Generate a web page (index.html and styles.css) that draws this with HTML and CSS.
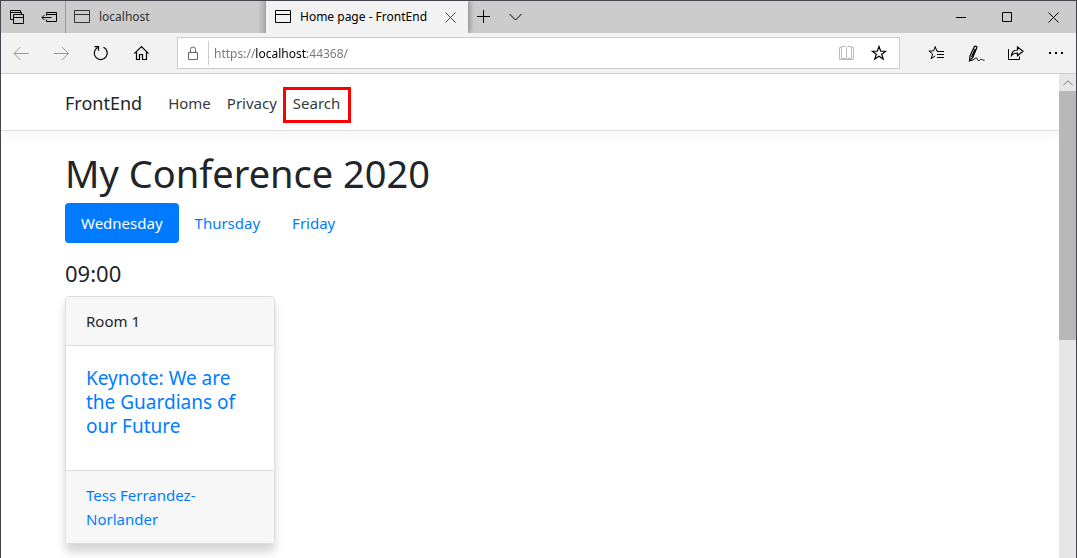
FILE: index.html
```html
<!DOCTYPE html>
<html lang="en">
<head>
<meta charset="utf-8">
<title>Home page - FrontEnd</title>
<link rel="stylesheet" href="styles.css">
</head>
<body>
<div class="window">
  <div class="titlebar">
    <div class="tab-tools">
      <button class="tool" aria-label="Tabs you've set aside"><svg width="16" height="16" viewBox="0 0 16 16"><path d="M4.500 10.500h-3v-9h10v2M1.500 3.500h11v2M4.500 5.500h10v9h-10zM4.500 8.500h10" /></svg></button>
      <button class="tool" aria-label="Set these tabs aside"><svg width="17" height="16" viewBox="0 0 17 16"><path d="M5.500 6.500V3.500h10v9h-10v-2M5.500 5.500h10M1 8.500h9.500M3.500 6L1 8.500 3.500 11" /></svg></button>
    </div>
    <button class="tab"><svg width="17" height="14" viewBox="0 0 17 14"><path d="M.5.5h15v12H.5zM.5 4.500h15" /></svg><span>localhost</span></button>
    <div class="tab tab-active">
      <svg width="17" height="14" viewBox="0 0 17 14"><path d="M.5.5h15v12H.5zM.5 4.500h15" /></svg><span>Home page - FrontEnd</span>
      <button class="close-tab" aria-label="Close tab"><svg width="11" height="11" viewBox="0 0 11 11"><path d="M.5.5l10 10M10.500.5l-10 10" /></svg></button>
    </div>
    <button class="tool strip-tool" aria-label="New tab"><svg width="14" height="14" viewBox="0 0 14 14"><path d="M6.500 0v13M0 6.500h13" /></svg></button>
    <button class="tool strip-tool" aria-label="Show tab previews"><svg width="14" height="14" viewBox="0 0 14 14"><path d="M.5 4l6 6 6-6" /></svg></button>
    <div class="caption">
      <button aria-label="Minimize"><svg width="11" height="11" viewBox="0 0 11 11"><path d="M0 5.500h10" /></svg></button>
      <button aria-label="Maximize"><svg width="11" height="11" viewBox="0 0 11 11"><path d="M.5.5h9v9h-9z" /></svg></button>
      <button aria-label="Close"><svg width="11" height="11" viewBox="0 0 11 11"><path d="M.5.5l10 10M10.500.5l-10 10" /></svg></button>
    </div>
  </div>

  <div class="toolbar">
    <button class="nav-btn" aria-label="Back" disabled><svg width="16" height="16" viewBox="0 0 16 16"><path d="M15.500 8.500H1M7.500 2L1 8.500 7.500 15" /></svg></button>
    <button class="nav-btn" aria-label="Forward" disabled><svg width="16" height="16" viewBox="0 0 16 16"><path d="M1 8.500h14.500M9 2l6.500 6.500L9 15" /></svg></button>
    <button class="nav-btn" aria-label="Refresh"><svg width="16" height="16" viewBox="0 0 16 16"><path class="medium" d="M10.500 2.200A6.500 6.500 0 1 1 4.500 2.500M1.500 1.700h4v4" /></svg></button>
    <button class="nav-btn" aria-label="Home"><svg width="16" height="16" viewBox="0 0 16 16"><path class="medium" d="M1.300 8.700L8.500 1.500l7 7.200M3.500 7v7.500h3V9.500h3v5h4V7" /></svg></button>
    <form class="address">
      <svg class="lock" width="12" height="14" viewBox="0 0 12 14"><path d="M1.500 6.500h9v7h-9zM3.500 6.500v-3a2.500 2.500 0 0 1 5 0v3" /></svg>
      <input class="url" type="text" aria-label="Address" value="https://localhost:44368/">
      <button type="button" class="reading" aria-label="Reading view" disabled><svg width="16" height="15" viewBox="0 0 16 15"><path d="M2.500 1.500h-2v12h14v-12h-2M7.500 2v10.500M2.500.5h4l1 1 1-1h4v12h-4l-1 1-1-1h-4z" /></svg></button>
      <button type="button" aria-label="Add to favorites"><svg width="16" height="16" viewBox="0 0 16 16"><path class="medium" d="M8 1.500l1.700 4.600 5 .1-4 3 1.500 4.900L8 11.200l-4.200 2.900 1.500-4.900-4-3 5-.1z" /></svg></button>
    </form>
    <div class="actions">
      <button aria-label="Favorites"><svg width="17" height="16" viewBox="0 0 17 16"><path d="M10 6L8.700 5.900 7.200 1.500 5.600 5.900.9 6.100l3.700 2.900-1.400 4.700 4-2.800M9 6.500h7M9 9.500h7M9 12.500h7" /></svg></button>
      <button aria-label="Add notes"><svg width="17" height="17" viewBox="0 0 17 17"><path class="medium" d="M6.500 1.500c1-.8 2.700 0 2.300 1.300L4.800 12.500 1.500 15.700l.5-4.800zM7.300 4L3.500 12" /><path d="M1.500 15.700c4 .2 5.500-3 7-2.700s.3 2.500 2 2.500 1.700-1.300 3-1.200 1 1.200 3 .9" /></svg></button>
      <button aria-label="Share"><svg width="17" height="16" viewBox="0 0 17 16"><path d="M.5 4v10.500h11V11.500" /><path class="medium" d="M3.500 10.500c.3-4 2.500-5.500 6-5.500V2l5.500 4.300L9.500 10.700V8c-3 0-4.500.5-6 2.500z" /></svg></button>
      <button aria-label="Settings and more"><svg width="16" height="4" viewBox="0 0 16 4"><path class="dots" d="M1 1h2v2H1zM7 1h2v2H7zM13 1h2v2h-2z" /></svg></button>
    </div>
  </div>

  <div class="viewport">
    <div class="page">
      <header class="navbar">
        <nav class="container navbar-inner">
          <a class="brand" href="#">FrontEnd</a>
          <a class="nav-link" href="#">Home</a>
          <a class="nav-link" href="#">Privacy</a>
          <a class="nav-link highlighted" href="#">Search</a>
        </nav>
      </header>
      <main class="container">
        <h1>My Conference 2020</h1>
        <nav class="pills">
          <a class="pill pill-active" href="#">Wednesday</a>
          <a class="pill" href="#">Thursday</a>
          <a class="pill" href="#">Friday</a>
        </nav>
        <h4>09:00</h4>
        <article class="card">
          <div class="card-header">Room 1</div>
          <div class="card-body"><h5><a href="#">Keynote: We are the Guardians of our Future</a></h5></div>
          <div class="card-footer"><a href="#">Tess Ferrandez-Norlander</a></div>
        </article>
      </main>
    </div>
    <div class="scrollbar">
      <button aria-label="Scroll up"><svg width="10" height="6" viewBox="0 0 10 6"><path d="M.5 5L5 .8 9.500 5" /></svg></button>
      <div class="thumb"></div>
    </div>
  </div>
</div>
</body>
</html>
```
FILE: styles.css
```css
* { box-sizing: border-box; }

body {
  margin: 0;
  font-family: "Noto Sans", "Open Sans", sans-serif;
  font-size: 15px;
  line-height: 24px;
  color: #212529;
  background: #fff;
}

button {
  display: flex;
  align-items: center;
  justify-content: center;
  padding: 0;
  border: 0;
  background: none;
  color: #000;
  font: inherit;
}

svg { flex: none; fill: none; stroke: currentColor; stroke-width: 1; }
.medium { stroke-width: 1.2; }
.dots { fill: currentColor; stroke: none; }
a { color: #007bff; text-decoration: none; }

.window {
  display: flex;
  flex-direction: column;
  height: 100vh;
  border: 1px solid #45434b;
  border-bottom: 0;
  overflow: hidden;
}

/* Tab strip */
.titlebar {
  display: flex;
  flex: none;
  height: 32px;
  background: #ccc;
  font-size: 12px;
}
.tab-tools { display: flex; width: 65px; border-right: 1px solid #999; }
.tool { width: 32px; }
.strip-tool { width: 32px; }
.tab {
  display: flex;
  align-items: center;
  justify-content: flex-start;
  gap: 8px;
  width: 200px;
  padding: 0 8px;
  color: #333;
  background: linear-gradient(to left, #aaa, #ccc 8px);
}
.tab-active {
  width: 202px;
  padding-left: 9px;
  background: #f2f2f2;
  color: #000;
  box-shadow: 2px 0 5px rgba(0, 0, 0, .3);
}
.close-tab { margin-left: auto; width: 20px; height: 20px; color: #444; }
.caption { display: flex; margin-left: auto; }
.caption button { width: 46px; }

/* Address bar */
.toolbar {
  display: flex;
  flex: none;
  align-items: center;
  height: 41px;
  background: #f2f2f2;
  border-bottom: 1px solid #ccc;
}
.nav-btn { width: 40px; height: 40px; }
.nav-btn:disabled { color: #999; }
.address {
  display: flex;
  flex: 1;
  align-items: center;
  height: 32px;
  margin-left: 16px;
  padding-right: 4px;
  border: 1px solid #ccc;
  background: #fff;
}
.address button { width: 32px; height: 30px; }
.address .reading { color: #bbb; }
.lock { margin: 0 9px; color: #666; }
.url {
  flex: 1;
  min-width: 0;
  height: 24px;
  padding: 0 0 0 5px;
  border: 0;
  border-left: 1px solid #ccc;
  outline: 0;
  font: 12px "Noto Sans", "Open Sans", sans-serif;
  color: transparent;
  background: linear-gradient(to right, #777 46px, #000 46px, #000 98px, #777 98px);
  background-clip: text;
}
.actions { display: flex; margin-left: 16px; }
.actions button { width: 40px; height: 40px; }

/* Page */
.viewport { display: flex; flex: 1; min-height: 0; }
.page { flex: 1; min-width: 0; overflow: hidden; }
.container { width: 100%; max-width: 960px; margin: 0 auto; padding: 0 15px; }
.navbar {
  border-bottom: 1px solid #dee2e6;
  box-shadow: 0 4px 12px rgba(0, 0, 0, .05);
  margin-bottom: 16px;
}
.navbar-inner { display: flex; align-items: center; height: 56px; padding-top: 1px; }
.brand { margin-right: 18px; font-size: 18px; color: #212529; }
.nav-link { position: relative; padding: 8px; color: #343a40; }
.highlighted::after {
  content: "";
  position: absolute;
  inset: 4px -3px 0 -2px;
  border: 3px solid #f00;
}
h1, h4, h5 { margin: 0; font-weight: 400; }
h1 { margin-bottom: 4px; font-size: 38px; line-height: 52px; }
h4 { margin: 16px 0 8px; font-size: 22px; line-height: 29px; }
h5 { margin-bottom: 12px; font-size: 19px; line-height: 24px; }
.pills { display: flex; }
.pill { padding: 8px 16px; border-radius: 4px; }
.pill-active { color: #fff; background: #007bff; }
.card {
  width: 210px;
  border: 1px solid #dcdcdc;
  border-radius: 4px;
  box-shadow: 0 8px 10px rgba(0, 0, 0, .17);
}
.card-header, .card-footer { padding: 12px 20px; background: #f7f7f7; }
.card-header { border-bottom: 1px solid #dcdcdc; border-radius: 3px 3px 0 0; }
.card-body { padding: 20px; }
.card-footer { border-top: 1px solid #dcdcdc; border-radius: 0 0 3px 3px; }

.scrollbar { flex: none; width: 17px; background: #e6e6e6; }
.scrollbar button { width: 17px; height: 17px; color: #777; }
.thumb { height: 51.5%; background: #b8b8b8; }
```
